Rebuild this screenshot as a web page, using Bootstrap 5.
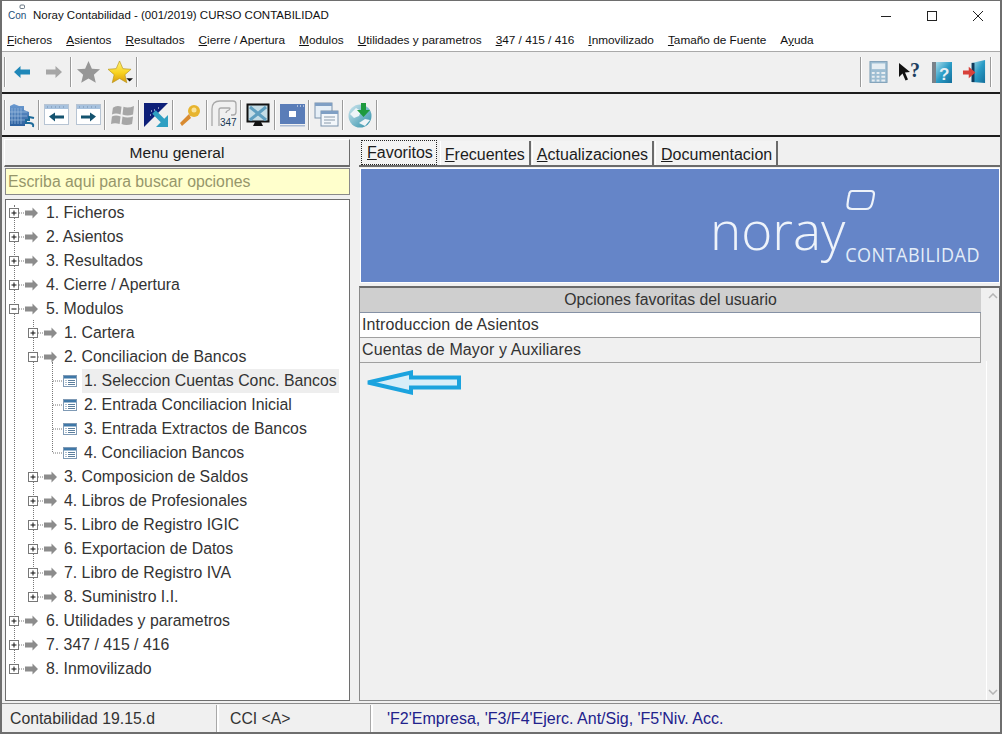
<!DOCTYPE html>
<html lang="es"><head><meta charset="utf-8"><title>Noray Contabilidad</title>
<link rel="stylesheet" href="https://cdn.jsdelivr.net/npm/bootstrap@5.3.0/dist/css/bootstrap.min.css">
<style>
html,body{margin:0;height:734px;overflow:hidden}
body{font-family:"Liberation Sans",Arial,sans-serif;background:#f0f0f0;color:#222}
.win{width:1002px;height:734px;border:1px solid #6e6e6e;border-width:1px 2px 2px 2px;display:flex;flex-direction:column;overflow:hidden}
.ttl{height:29px;background:#fff;font-size:11.5px;color:#111;padding-left:6px;flex:none}
.ttl .ci{font-size:10px;color:#24507a;width:25px;position:relative}
.caps{margin-left:auto}
.caps svg{display:block;width:46px;height:28px}
.mnu{height:22px;background:#fff;font-size:11.8px;color:#111;padding-left:5px;gap:14px;border-bottom:1px solid #a9a9a9;flex:none}
.tb{flex:none;border-bottom:2px solid #1c1c1c;background:#f0f0f0;padding-left:2px}
.tb1{height:42px}.tb2{height:43px}
.sep{width:1px;height:30px;background:#9a9a9a;border-right:1px solid #fff;box-sizing:content-box;flex:none}
.ico{width:32px;height:30px;display:flex;align-items:center;justify-content:center;flex:none}
.tbr{margin-right:8px}
.main{flex:1;min-height:0;gap:9px;padding:2px 0 2px 2px}
.lft{width:346px;flex:none}
.hd{height:28px;background:#f0f0f0;border:1px solid #fff;border-right-color:#6b6b6b;border-bottom:2px solid #6b6b6b;font-size:15.5px;color:#1c1c1c;flex:none}
.srch{height:27px;margin:1px 0 4px 1px;background:#ffffcc;border:1px solid #8a8a8a;color:#96966a;font-size:15.8px;padding-left:2px;line-height:25px;flex:none;width:345px}
.tree{flex:1;min-height:0;background:#fff;border:1px solid #6e6e6e;margin-left:1px;width:345px;padding-top:1px;font-size:15.85px;color:#333;position:relative}
.vl{position:absolute;width:0;border-left:1px dotted #777}
.nd{height:24px;display:flex;align-items:center;position:relative;white-space:nowrap}
.nd svg{flex:none}
.l0{padding-left:3px}.l1{padding-left:22px}.l2{padding-left:47px}
.tx{margin-left:2px;line-height:24px}
.l1 .tx{margin-left:1px}
.lf .tx{margin-left:5px;padding:0 2px}
.sel .tx{background:#eeeeee}
.rgt{flex:1;min-width:0}
.tabs{height:28px;border-bottom:2px solid #6b6b6b;padding-left:2px;flex:none;align-items:flex-end;font-size:16px;color:#1c1c1c}
.tbi{height:24px;line-height:27px;padding:0 4px;border-right:2px solid #6b6b6b;border-left:1px solid #fff;margin-right:1px;background:#f3f3f3}
.tbi.on{height:25px;line-height:23px;border:1px dotted #222;margin:0 3px 0 0;padding:0 3px 0 5px}
.tbl{padding-left:5px}
.ban{height:115px;margin:1px 0 0 1px;background:#6585c8;border:1px solid #fff;position:relative;flex:none;color:#eef3fa}
.lg{position:absolute;left:349px;top:31px;font-family:"Open Sans",sans-serif;font-size:53px;font-weight:300;line-height:60px}
.lg2{position:absolute;right:19px;top:75px;font-family:"Open Sans",sans-serif;font-size:18px;letter-spacing:.5px;line-height:20px;color:#e3edf8;transform:scaleY(1.15)}
.lring{position:absolute;left:484px;top:20px;width:31px;height:23px}
.gridw{flex:1;min-height:0;border:1px solid #8a8a8a;border-top:2px solid #6b6b6b;margin-top:3px;border-right:1px solid #6b6b6b}
.gr{flex:1;min-width:0;font-size:16px;color:#333;letter-spacing:.1px}
.gh{height:25px;background:#cfcfcf;border-bottom:1px solid #8591a5;font-size:15.8px;letter-spacing:0}
.grw{height:25px;line-height:24px;padding-left:2px;border-bottom:1px solid #a0a0a0;border-right:1px solid #a0a0a0}
.sb{width:13px;margin-left:5px;flex:none;font-size:0;background:linear-gradient(#fff,#fff) no-repeat 0 73px/1px 100%}
.arr{margin:5px 0 0 2px;display:block}
.st{height:29px;flex:none;font-size:16px;color:#333;border-top:1px solid #8c8c8c;padding-top:1px;background:#f0f0f0}
.stc{height:27px;line-height:28px;border-right:2px solid #fff;padding-left:8px;box-shadow:inset -1px 0 0 #a8a8a8;font-size:15.8px}
.blu{color:#22228c;padding-left:14px;flex:1;box-shadow:none;border:0;font-size:16px}
.hid{position:absolute;width:0;height:0}
</style></head><body>
<svg class="hid"><defs>
<linearGradient id="gd" x1="0" y1="0" x2="0" y2="1"><stop offset="0" stop-color="#fff27a"/><stop offset=".55" stop-color="#f8d21f"/><stop offset="1" stop-color="#d99a12"/></linearGradient>
<linearGradient id="gs" x1="0" y1="0" x2="0" y2="1"><stop offset="0" stop-color="#6d9bd1"/><stop offset="1" stop-color="#2b5f9e"/></linearGradient>
<linearGradient id="gc" x1="0" y1="0" x2="1" y2="1"><stop offset="0" stop-color="#a9dbe9"/><stop offset=".5" stop-color="#2a9cc6"/><stop offset="1" stop-color="#136f9c"/></linearGradient>
<linearGradient id="gg" x1="0" y1="0" x2="1" y2="1"><stop offset="0" stop-color="#cfe6ef"/><stop offset="1" stop-color="#2c8fa8"/></linearGradient>
</defs></svg>
<div class="win">
<div class="ttl d-flex align-items-center">
<span class="ci">Con<svg width="7" height="6" viewBox="0 0 7 6" style="position:absolute;left:11px;top:-4px"><rect x="1" y="1" width="4.5" height="3.500" rx="1" fill="none" stroke="#456" stroke-width=".8"/></svg></span>
<span>Noray Contabilidad - (001/2019) CURSO CONTABILIDAD</span>
<div class="caps d-flex">
<svg viewBox="0 0 46 28"><path d="M19 14.500h10" stroke="#222"/></svg>
<svg viewBox="0 0 46 28"><rect x="19.500" y="9.500" width="9" height="9" fill="none" stroke="#222"/></svg>
<svg viewBox="0 0 46 28"><path d="M19 9l10 10M29 9l-10 10" stroke="#222"/></svg>
</div></div>
<div class="mnu d-flex align-items-center">
<span><u>F</u>icheros</span><span><u>A</u>sientos</span><span><u>R</u>esultados</span><span><u>C</u>ierre / Apertura</span><span><u>M</u>odulos</span><span><u>U</u>tilidades y parametros</span><span><u>3</u>47 / 415 / 416</span><span><u>I</u>nmovilizado</span><span><u>T</u>amaño de Fuente</span><span>A<u>y</u>uda</span>
</div>
<div class="tb tb1 d-flex align-items-center">
<i class="sep"></i>
<div class="ico"><svg width="16" height="12" viewBox="0 0 16 12"><path d="M0 6l6.500-6v3.500H16v5H6.500V12z" fill="#1f87b8"/></svg></div>
<div class="ico"><svg width="16" height="12" viewBox="0 0 16 12"><path d="M16 6L9.500 0v3.500H0v5h9.500V12z" fill="#a6a6a6"/></svg></div>
<i class="sep"></i>
<div class="ico"><svg width="25" height="24" viewBox="0 0 26 25"><path d="M13 1l3.500 8 8.500.7-6.400 5.600 2 8.400L13 19.200 5.400 23.700l2-8.400L1 9.700 9.500 9z" fill="#979797"/></svg></div>
<div class="ico"><svg width="27" height="24" viewBox="0 0 28 25"><path d="M13 1l3.500 8 8.500.7-6.400 5.600 2 8.400L13 19.200 5.400 23.700l2-8.400L1 9.700 9.500 9z" fill="url(#gd)" stroke="#b8961c" stroke-width=".7"/><path d="M20 19h7l-3.500 3.500z" fill="#111"/></svg></div>
<i class="sep"></i>
<div class="ms-auto d-flex align-items-center tbr">
<i class="sep"></i>
<div class="ico"><svg width="19" height="24" viewBox="0 0 20 24"><rect x="1" y="1" width="18" height="22" fill="#9dbdd2" stroke="#80a0b8"/><rect x="3" y="3" width="14" height="6" fill="#e6eef3"/><path d="M3 12h3v2H3zM8 12h3v2H8zM13 12h4v2h-4zM3 16h3v2H3zM8 16h3v2H8zM13 16h4v2h-4zM3 20h3v2H3zM8 20h3v2H8zM13 20h4v2h-4z" fill="#e7edf1"/></svg></div>
<div class="ico"><svg width="24" height="24" viewBox="0 0 24 24"><path d="M1 3l11 9-5 .5 3 7-2.500 1-3-7L1 17z" fill="#111"/><text x="12" y="17" font-family="Liberation Serif" font-weight="700" font-size="20" fill="#1d3f60">?</text></svg></div>
<div class="ico"><svg width="20" height="24" viewBox="0 0 20 24"><rect x="0" y="2" width="5" height="21" fill="#79828a"/><rect x="4" y="2" width="16" height="21" fill="url(#gc)"/><text x="7" y="20" font-family="Liberation Sans" font-weight="700" font-size="17" fill="#e6eff4">?</text></svg></div>
<div class="ico"><svg width="25" height="24" viewBox="0 0 26 25"><path d="M10 3l14-3v24l-14-1z" fill="url(#gc)"/><path d="M10 3h3v20h-3z" fill="#113b5c"/><path d="M1 11h6V7l7 6-7 6v-4H1z" fill="#d8413a"/></svg></div>
<i class="sep"></i>
</div></div>
<div class="tb tb2 d-flex align-items-center">
<i class="sep"></i>
<div class="ico"><svg width="26" height="26" viewBox="0 0 26 26"><path d="M1 24V4l4-2 5 2h5v4l5 2v8h-4v6z" fill="url(#gs)"/><path d="M3 6v16M6 6v16M9 6v16M12 6v16M1 10h17M1 14h17M1 18h17" stroke="#9dbde0" stroke-width=".7"/><path d="M25 16l-5-1v3h-3v3h3c3 0 5 1 4 4" fill="none" stroke="#1d6a9a" stroke-width="2"/></svg></div><i class="sep"></i>
<div class="ico"><svg width="25" height="21" viewBox="0 0 25 21"><rect x=".5" y=".5" width="24" height="20" fill="#fff" stroke="#b7c4d3"/><rect x="1" y="1" width="23" height="4" fill="#a8c2de"/><path d="M3 3h1M7 3h1M11 3h1M15 3h1M19 3h1" stroke="#708cab"/><path d="M5 12.500l6-4v3h9v3h-9v3z" fill="#14536f"/></svg></div>
<div class="ico"><svg width="25" height="21" viewBox="0 0 25 21"><rect x=".5" y=".5" width="24" height="20" fill="#fff" stroke="#b7c4d3"/><rect x="1" y="1" width="23" height="4" fill="#a8c2de"/><path d="M3 3h1M7 3h1M11 3h1M15 3h1M19 3h1" stroke="#708cab"/><path d="M20 12.500l-6-4v3H5v3h9v3z" fill="#14536f"/></svg></div><i class="sep"></i>
<div class="ico"><svg width="25" height="23" viewBox="0 0 26 24"><path d="M3 5q4-3 9-1l-1 8q-5-2-9 0zM14 4q5 2 11-1l-1 9q-6 2-11 0zM2 14q4-2 9 0l-1 8q-5-2-9 0zM13 14q5 2 11 0l-1 8q-6 2-11 0z" fill="#a6a6a6"/></svg></div><i class="sep"></i>
<div class="ico"><svg width="24" height="24" viewBox="0 0 24 24"><path d="M0 0h24L0 24z" fill="#0d1f78"/><path d="M10 9l10 10" stroke="#2f9fc2" stroke-width="5"/><path d="M24 12v12H12z" fill="#2f9fc2"/><path d="M6 12h1M10 7h1M14 5h1M7 8h1" stroke="#fff"/></svg></div><i class="sep"></i>
<div class="ico"><svg width="24" height="24" viewBox="0 0 24 24"><circle cx="16" cy="8" r="6" fill="#e7b42e"/><circle cx="16" cy="7" r="2.500" fill="#f9e39a"/><path d="M11 11L2 20l2 3 9-8" fill="#d88a30"/></svg></div><i class="sep"></i>
<div class="ico"><svg width="26" height="29" viewBox="0 0 26 29"><path d="M1 26V9q0-8 8-8h13q3 0 3 3v8q0 3-3 3h-2M8 26V10q0-2 2-2h8q2 0 0 2q-3 1-3 3" fill="none" stroke="#a9a9a9" stroke-width="1.300"/><text x="9" y="26" font-family="Liberation Sans" font-size="10" fill="#1a3a55">347</text></svg></div><i class="sep"></i>
<div class="ico"><svg width="24" height="24" viewBox="0 0 24 24"><rect x="1.500" y="1.500" width="21" height="17" fill="#c5dde6" stroke="#111" stroke-width="2"/><path d="M4 4l16 13M20 4L4 17" stroke="#5f9fc0" stroke-width="3"/><path d="M7 23h10l-2-4H9z" fill="#111"/></svg></div><i class="sep"></i>
<div class="ico"><svg width="25" height="24" viewBox="0 0 25 24"><rect x="0" y="1" width="25" height="20" fill="#5a7db8"/><rect x="0" y="22" width="25" height="1.500" fill="#a9b9d2"/><path d="M17 3h1M20 3h1M23 3h1" stroke="#fff"/><rect x="9" y="8" width="7" height="6" fill="#fff"/></svg></div><i class="sep"></i>
<div class="ico"><svg width="25" height="25" viewBox="0 0 25 25"><rect x="1" y="1" width="17" height="15" fill="#e6eff7" stroke="#7a92ab"/><rect x="1" y="1" width="17" height="3" fill="#7f9fc4"/><rect x="7" y="9" width="17" height="15" fill="#f3f7fb" stroke="#7a92ab"/><rect x="7" y="9" width="17" height="3" fill="#7f9fc4"/><path d="M10 15h11M10 18h11M10 21h7" stroke="#8a9aaa"/></svg></div><i class="sep"></i>
<div class="ico"><svg width="26" height="26" viewBox="0 0 26 26"><circle cx="13" cy="14" r="11.500" fill="url(#gg)"/><path d="M3 12l6-6 5 3-2 5-5 2zM12 21l6-4 5 1-5 6z" fill="#eef4f7"/><path d="M14 1h5v7h4l-6.500 7L10 8h4z" fill="#1e9a3d"/></svg></div><i class="sep"></i>
</div>
<div class="main d-flex">
<div class="lft d-flex flex-column">
<div class="hd d-flex align-items-center justify-content-center">Menu general</div>
<div class="srch">Escriba aqui para buscar opciones</div>
<div class="tree" id="t"></div>
</div>
<div class="rgt d-flex flex-column">
<div class="tabs d-flex"><span class="tbi on"><u>F</u>avoritos</span><span class="tbi"><u>F</u>recuentes</span><span class="tbi"><u>A</u>ctualizaciones</span><span class="tbi tbl"><u>D</u>ocumentacion</span></div>
<div class="ban"><span class="lg">noray</span>
<svg class="lring" viewBox="0 0 31 23"><path d="M7 2h19q3 0 3 3q-.5 5-2 10q-1.500 5-6 5H7q-5 0-4.500-4.500q.5-5 1.500-9.500q.5-4 3-4z" fill="none" stroke="#eef3fa" stroke-width="2.200"/></svg>
<span class="lg2">CONTABILIDAD</span></div>
<div class="gridw d-flex">
<div class="gr"><div class="gh d-flex align-items-center justify-content-center">Opciones favoritas del usuario</div>
<div class="grw bg-white">Introduccion de Asientos</div><div class="grw">Cuentas de Mayor y Auxiliares</div>
<svg class="d-block" width="98" height="28" viewBox="0 0 98 28" style="margin:5px 0 0 5px"><path d="M3 14.500L46 4.500v5h48v10H46v5z" fill="#d8eef8" stroke="#1ba3de" stroke-width="4"/></svg>
</div>
<div class="sb"><svg class="arr" width="10" height="6" viewBox="0 0 10 6"><path d="M1 5l4-4 4 4" fill="none" stroke="#b5b5b5" stroke-width="1.500"/></svg><svg class="arr" style="margin-top:390px" width="10" height="6" viewBox="0 0 10 6"><path d="M1 1l4 4 4-4" fill="none" stroke="#b5b5b5" stroke-width="1.500"/></svg></div>
</div></div></div>
<div class="st d-flex">
<div class="stc" style="width:217px">Contabilidad 19.15.d</div>
<div class="stc" style="width:154px;padding-left:11px">CCI &lt;A&gt;</div>
<div class="stc blu">'F2'Empresa, 'F3/F4'Ejerc. Ant/Sig, 'F5'Niv. Acc.</div>
</div>
</div>
<script>
var rows=[[0,'p','1. Ficheros'],[0,'p','2. Asientos'],[0,'p','3. Resultados'],[0,'p','4. Cierre / Apertura'],[0,'m','5. Modulos'],[1,'p','1. Cartera'],[1,'m','2. Conciliacion de Bancos'],[2,'l','1. Seleccion Cuentas Conc. Bancos',1],[2,'l','2. Entrada Conciliacion Inicial'],[2,'l','3. Entrada Extractos de Bancos'],[2,'l','4. Conciliacion Bancos'],[1,'p','3. Composicion de Saldos'],[1,'p','4. Libros de Profesionales'],[1,'p','5. Libro de Registro IGIC'],[1,'p','6. Exportacion de Datos'],[1,'p','7. Libro de Registro IVA'],[1,'p','8. Suministro I.I.'],[0,'p','6. Utilidades y parametros'],[0,'p','7. 347 / 415 / 416'],[0,'p','8. Inmovilizado']];
function box(k){return '<svg width="35" height="24" viewBox="0 0 35 24"><rect x=".5" y="7.500" width="9" height="9" fill="#fff" stroke="#777"/><path d="M2.500 12h5'+(k=='p'?'M5 9.500v5':'')+'" stroke="#111"/><path d="M10 12h6" stroke="#777" stroke-dasharray="1 1"/><path d="M16 9.500h7.500V6.500L29 12l-5.500 5.500v-3H16z" fill="#8c8c8c"/></svg>';}
var lf='<svg width="24" height="24" viewBox="0 0 24 24"><path d="M0 12h10" stroke="#777" stroke-dasharray="1 1"/><rect x="10.500" y="6.500" width="13" height="11" fill="#fff" stroke="#7f9ab5"/><rect x="11" y="7" width="12" height="2.500" fill="#3f78a8"/><path d="M12.500 11.500h1M15 11.500h7M12.500 13.500h1M15 13.500h7M12.500 15.500h1M15 15.500h7" stroke="#5c7f9e"/></svg>';
var h='<i class="vl" style="left:8px;top:5px;height:460px"></i><i class="vl" style="left:27px;top:120px;height:273px"></i><i class="vl" style="left:46px;top:162px;height:90px"></i>';
rows.forEach(function(r){h+='<div class="nd l'+r[0]+(r[1]=='l'?' lf':'')+(r[3]?' sel':'')+'">'+(r[1]=='l'?lf:box(r[1]))+'<span class="tx">'+r[2]+'</span></div>';});
document.getElementById('t').innerHTML=h;
</script>
<script src="https://cdn.jsdelivr.net/npm/bootstrap@5.3.0/dist/js/bootstrap.bundle.min.js"></script>
</body></html>
